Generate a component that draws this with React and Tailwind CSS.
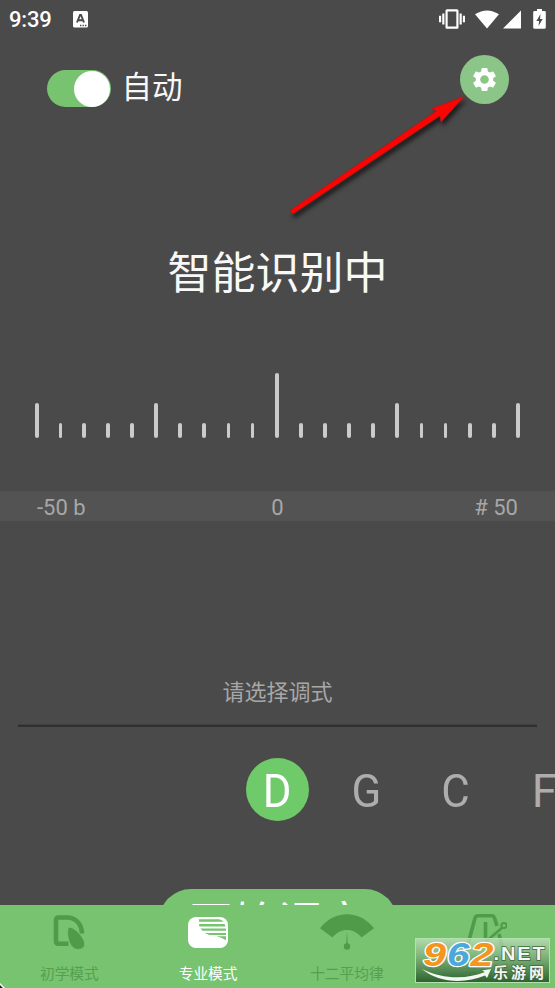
import React from "react";
import { MdSettings, MdVibration } from "react-icons/md";

const CJK = "font-['Roboto','Noto_Sans_CJK_SC',sans-serif]";

function StatusBar() {
  return (
    <div className="flex h-[38px] items-center pl-[9px] pr-[9px] text-white">
      <span className="pt-px text-[22px] font-medium leading-none tracking-[-0.2px]">9:39</span>
      <svg className="ml-[21px]" width="15" height="17" viewBox="0 0 15 17">
        <rect width="15" height="16.5" rx="1.5" fill="#fff" />
        <path d="M4 11.5 7 4h1l3 7.5M5 9.2h5" fill="none" stroke="#4a4a4a" strokeWidth="1.9" />
        <path d="M7 14.5h1.4M9.5 14.5h1.4M12 14.5h1.4" stroke="#4a4a4a" strokeWidth="1.3" />
      </svg>
      <MdVibration className="ml-auto" size={26} />
      <svg className="ml-[10px]" width="24" height="19" viewBox="0 0 24 19">
        <path d="M0 4.2Q12-3.4 24 4.2L12 18.4Z" fill="#fff" />
      </svg>
      <svg className="ml-[4px]" width="18" height="19" viewBox="0 0 18 19">
        <path d="M18 .5V18.5H0Z" fill="#fff" />
      </svg>
      <svg className="ml-[12px]" width="13" height="20" viewBox="0 0 13 20">
        <path d="M4 0h5v2h2.500a1.300 1.300 0 0 1 1.300 1.300v15a1.500 1.500 0 0 1-1.500 1.500H1.700A1.500 1.500 0 0 1 .2 18.300v-15A1.300 1.300 0 0 1 1.500 2H4Z" fill="#fff" />
        <path d="M7.600 5 3.400 12h2.700l-.6 5 4.200-7H7Z" fill="#4a4a4a" />
      </svg>
    </div>
  );
}

function Header() {
  return (
    <div className="flex h-[82px] items-start pl-[47px] pr-[46px]">
      <div className="mt-[32px] flex h-[37px] w-[63.500px] justify-end rounded-full bg-[#77c370] p-[0.5px]">
        <div className="size-[36px] rounded-full bg-white" />
      </div>
      <span className="ml-[11px] mt-[29.500px] text-[30.500px] leading-[40px] text-[#f8f8f8]">自动</span>
      <div className="ml-auto mt-[17px] flex size-[49px] items-center justify-center rounded-full bg-[#8bc587] text-white">
        <MdSettings size={29} />
      </div>
    </div>
  );
}

const ticks = Array.from({ length: 21 }, (_, i) => i);

function tickHeight(i) {
  if (i === 10) return "h-[65px]";
  return i % 5 === 0 ? "h-[35px]" : "h-[15.5px]";
}

function Meter() {
  return (
    <div>
      <div className="flex h-[65px] items-end pl-[35px]">
        {ticks.map((i) => (
          <div
            key={i}
            className={"w-[3.7px] shrink-0 rounded-full bg-[#cbcbcb] " + (i < 3 ? "mr-[19.97px] " : "mr-[20.45px] ") + tickHeight(i)}
          />
        ))}
      </div>
      <div className="mt-[53px] grid h-[30px] grid-cols-3 items-center bg-[#535353] px-[37px] text-[22px] leading-[30px] text-[#a7a7a7]">
        <span className="pt-[2px]">-50 b</span>
        <span className="pt-[2px] text-center">0</span>
        <span className="pt-[2px] text-right"># 50</span>
      </div>
    </div>
  );
}

function Notes() {
  return (
    <div className="ml-[233px] mt-[31px] flex h-[63px] text-[46px] leading-[67px] text-[#adadad]">
      <div className="flex w-[89px] shrink-0 justify-center">
        <div className="size-[63px] rounded-full bg-[#6fca69] text-center text-white">
          <span className="inline-block scale-x-95">D</span>
        </div>
      </div>
      <div className="w-[89px] shrink-0 scale-x-95 text-center">G</div>
      <div className="w-[89px] shrink-0 scale-x-95 text-center">C</div>
      <div className="w-[89px] shrink-0 text-center">F</div>
    </div>
  );
}

function BeginnerIcon() {
  return (
    <svg width="34" height="36" viewBox="0 0 34 36">
      <path d="M16.5 29.7H6a2 2 0 0 1-2-2V5.500a2 2 0 0 1 2-2H15c8.500 0 14.500 6 15 16" fill="none" stroke="#4f9b49" strokeWidth="4.600" />
      <path d="M15.800 15.500c.8-3.500 4.500-2.200 7.200 0 4.500 3.600 9.700 9.500 9.700 14.500 0 3.700-3.200 5.500-7.200 5.500-7.500 0-11-13-9.700-20Z" fill="#4f9b49" stroke="#77c370" strokeWidth="1" />
    </svg>
  );
}

function ProIcon() {
  return (
    <svg width="40" height="31" viewBox="0 0 40 31">
      <rect width="40" height="31" rx="8" fill="#fff" />
      <path d="M11 2.200h20q3 .6 4.500 2.600H11Zm0 4.800h25.500l1.200 2.500H11.500Zm1.400 4.600h25.500v2.200H14.500Zm4.400 4.400h21.200v2H21.500Zm10.200 3.200H38v4q-5-2.800-9.500-4Z" fill="#77c370" />
    </svg>
  );
}

function GaugeIcon() {
  return (
    <svg width="54" height="36" viewBox="0 0 54 36">
      <path d="M0 14.3C14-4.600 40-4.600 54 14.3L41.500 23.500C34 13.500 20 13.500 12.500 23.500Z" fill="#4f9b49" />
      <path d="m27 17-.8 13h1.600Z" fill="#4f9b49" />
      <circle cx="27" cy="32.500" r="3.200" fill="#4f9b49" />
    </svg>
  );
}

function MetronomeIcon() {
  return (
    <svg width="42" height="36" viewBox="0 0 42 36">
      <path d="M2 34 10 4Q10.800 1.800 13 1.800h13.500q2.200 0 3 2.200L32 12M34 20l3.500 14M20.500 8v19" fill="none" stroke="#4f9b49" strokeWidth="3.600" />
      <path d="M20.500 28 38.500 12.500" stroke="#4f9b49" strokeWidth="2.800" />
      <circle cx="39" cy="11.500" r="2.600" fill="#77c370" stroke="#4f9b49" strokeWidth="2" />
    </svg>
  );
}

function NavItem({ label, active, children }) {
  return (
    <div className={"flex w-1/4 flex-col items-center text-[14.7px] leading-[20px] " + (active ? "text-white" : "text-[#55a04f]")}>
      <div className="flex h-[54px] items-center">{children}</div>
      <span className="mt-[5px]">{label}</span>
    </div>
  );
}

function Watermark() {
  return (
    <svg className="absolute left-[415px] top-[938px]" width="135" height="45" viewBox="0 0 135 45">
      <defs>
        <linearGradient id="plate" x1="0" y1="0" x2="0" y2="1">
          <stop offset="0" stopColor="#c4e2c0" stopOpacity=".75" />
          <stop offset=".45" stopColor="#79a976" stopOpacity=".8" />
          <stop offset="1" stopColor="#205322" stopOpacity=".88" />
        </linearGradient>
      </defs>
      <rect x=".5" y=".5" width="134" height="44" fill="url(#plate)" stroke="#b6dfb0" />
      <g fontFamily="Liberation Sans" fontWeight="bold" fontStyle="italic" fontSize="33" stroke="#fff" strokeWidth="2.4" paintOrder="stroke" strokeLinejoin="round">
        <text x="8" y="27.500" fill="#f5941f" textLength="23" lengthAdjust="spacingAndGlyphs">9</text>
        <text x="32" y="27.500" fill="#4ba8dc" textLength="22.500" lengthAdjust="spacingAndGlyphs">6</text>
        <text x="55.500" y="27.500" fill="#f5941f" textLength="23" lengthAdjust="spacingAndGlyphs">2</text>
      </g>
      <path d="M7 31C29 42 53 41 70 34l-3-1.500 9-1.500-4 9-2-2.500C50 46 23 45 7 31Z" fill="#f3f7f2" />
      <g fill="#f3f6f2" stroke="#40663f" strokeWidth="1.4" paintOrder="stroke">
        <text x="78.500" y="22" fontFamily="Liberation Sans" fontWeight="bold" fontSize="19" textLength="53" lengthAdjust="spacingAndGlyphs" letterSpacing="1.8">.NET</text>
        <text x="78" y="39.500" fontFamily="Noto Sans CJK SC" fontWeight="bold" fontSize="15" textLength="51" lengthAdjust="spacing">乐游网</text>
      </g>
    </svg>
  );
}

function Arrow() {
  return (
    <svg className="absolute left-[280px] top-[85px] drop-shadow-[2px_4px_2px_rgba(0,0,0,0.6)]" width="200" height="140" viewBox="0 0 200 140">
      <path d="M11.500 124.500 156.500 26 152 23.500 184 11.500 161 37 160 30.800 13.800 128.200A2.200 2.200 0 0 1 11.500 124.500Z" fill="#fa0504" stroke="#c41210" strokeWidth=".8" />
    </svg>
  );
}

export default function App() {
  return (
    <div className={"relative flex h-[988px] w-[555px] flex-col overflow-hidden bg-[#4a4a4a] " + CJK}>
      <main className="h-[905px] shrink-0 overflow-hidden">
        <StatusBar />
        <Header />
        <h1 className="mt-[121px] h-[66px] text-center text-[44px] leading-[66px] text-[#f8f8f8]">智能识别中</h1>
        <div className="mt-[66px]">
          <Meter />
        </div>
        <p className="mt-[156px] h-[32px] text-center text-[22px] leading-[32px] text-[#a7a7a7]">请选择调式</p>
        <div className="ml-[18px] mr-[18.5px] mt-[15px] h-[3px] border-t border-[#404040] bg-[#303030]" />
        <Notes />
        <button className="mx-auto mt-[68px] block h-[64px] w-[238px] rounded-full bg-[#77c370] pt-[3px] text-[44.5px] leading-[64px] text-white">开始调音</button>
      </main>
      <nav className="flex h-[83px] shrink-0 bg-[#77c370]">
        <NavItem label="初学模式"><BeginnerIcon /></NavItem>
        <NavItem label="专业模式" active><ProIcon /></NavItem>
        <NavItem label="十二平均律"><GaugeIcon /></NavItem>
        <NavItem label="节拍器"><MetronomeIcon /></NavItem>
      </nav>
      <Arrow />
      <Watermark />
      <svg className="absolute bottom-0 left-0" width="5" height="5" viewBox="0 0 5 5">
        <path d="M0 0 5 5H0Z" fill="#fff" />
        <path d="M0 2 3 5H0Z" fill="#222" />
      </svg>
    </div>
  );
}
